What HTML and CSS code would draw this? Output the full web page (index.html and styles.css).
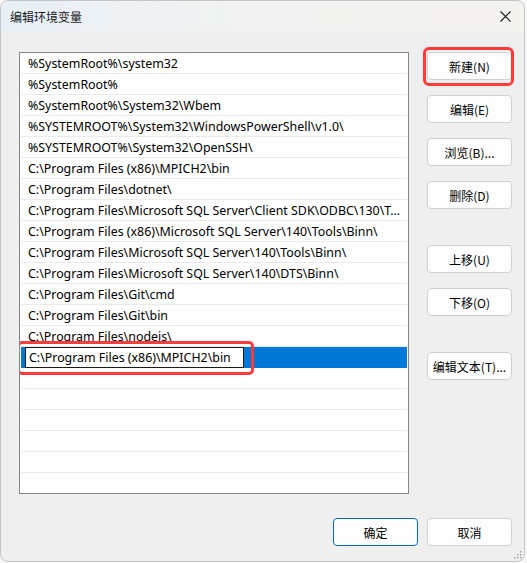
FILE: index.html
```html
<!DOCTYPE html>
<html lang="zh-CN">
<head>
  <meta charset="UTF-8">
  <title>编辑环境变量</title>
  <link rel="stylesheet" href="styles.css">
</head>
<body>

  <div class="window">
    <div class="titlebar">
      <span class="title">编辑环境变量</span>
      <span class="close">
        <svg width="11" height="11" viewBox="0 0 11 11">
          <path d="M0.5 0.5 L10.5 10.5 M10.5 0.5 L0.5 10.5" stroke="#1a1a1a" stroke-width="1.1" fill="none"/>
        </svg>
      </span>
    </div>

    <div class="content">
      <div class="main">
        <div class="listbox" id="pathList"></div>

        <div class="side">
          <button class="btn marked">新建(N)</button>
          <button class="btn">编辑(E)</button>
          <button class="btn">浏览(B)...</button>
          <button class="btn">删除(D)</button>
          <button class="btn group">上移(U)</button>
          <button class="btn">下移(O)</button>
          <button class="btn group">编辑文本(T)...</button>
        </div>
      </div>

      <div class="footer">
        <button class="btn primary">确定</button>
        <button class="btn">取消</button>
      </div>
    </div>

    <svg class="grip" width="8" height="8" viewBox="0 0 8 8">
      <rect x="6" y="0" width="1.5" height="1.5" fill="#a0a0a0"/>
      <rect x="3" y="3" width="1.5" height="1.5" fill="#a0a0a0"/>
      <rect x="6" y="3" width="1.5" height="1.5" fill="#a0a0a0"/>
      <rect x="0" y="6" width="1.5" height="1.5" fill="#a0a0a0"/>
      <rect x="3" y="6" width="1.5" height="1.5" fill="#a0a0a0"/>
      <rect x="6" y="6" width="1.5" height="1.5" fill="#a0a0a0"/>
    </svg>
  </div>

  <script>
    const paths = [
      "%SystemRoot%\\system32",
      "%SystemRoot%",
      "%SystemRoot%\\System32\\Wbem",
      "%SYSTEMROOT%\\System32\\WindowsPowerShell\\v1.0\\",
      "%SYSTEMROOT%\\System32\\OpenSSH\\",
      "C:\\Program Files (x86)\\MPICH2\\bin",
      "C:\\Program Files\\dotnet\\",
      "C:\\Program Files\\Microsoft SQL Server\\Client SDK\\ODBC\\130\\Tools\\Binn\\",
      "C:\\Program Files (x86)\\Microsoft SQL Server\\140\\Tools\\Binn\\",
      "C:\\Program Files\\Microsoft SQL Server\\140\\Tools\\Binn\\",
      "C:\\Program Files\\Microsoft SQL Server\\140\\DTS\\Binn\\",
      "C:\\Program Files\\Git\\cmd",
      "C:\\Program Files\\Git\\bin",
      "C:\\Program Files\\nodejs\\"
    ];
    const editing = "C:\\Program Files (x86)\\MPICH2\\bin";
    const emptyRows = 6;

    const list = document.getElementById('pathList');

    paths.forEach((p) => {
      const row = document.createElement('div');
      row.className = 'row';
      row.textContent = p;
      list.appendChild(row);
    });

    // the new entry, still being typed in
    const sel = document.createElement('div');
    sel.className = 'row selected';
    const input = document.createElement('span');
    input.className = 'editor';
    input.textContent = editing;
    const mark = document.createElement('span');
    mark.className = 'mark';
    sel.appendChild(input);
    sel.appendChild(mark);
    list.appendChild(sel);

    for (let i = 0; i < emptyRows; i++) {
      const row = document.createElement('div');
      row.className = 'row';
      list.appendChild(row);
    }
  </script>

</body>
</html>
```

FILE: styles.css
```css
body {
  margin: 0;
  background: #f7f7f7;
  font-family: "Noto Sans", "Noto Sans CJK SC", sans-serif;
  font-size: 12px;
  color: #000;
}

.window {
  position: relative;
  box-sizing: border-box;
  width: 525px;
  height: 562px;
  border: 1px solid #c4c4c4;
  border-radius: 8px;
  overflow: hidden;
  background: #efefef;
}

.titlebar {
  height: 30px;
  display: flex;
  align-items: center;
  justify-content: space-between;
  padding: 0 9px;
  background: linear-gradient(90deg, #e8f0f7 0%, #f1f2f2 45%, #f5f3ee 100%);
}

.title {
  font-family: "Noto Sans CJK SC", sans-serif;
  font-size: 12px;
  color: #1a1a1a;
}

.close {
  display: flex;
  margin-right: 4px;
}

.content {
  padding: 21px 12px 0 18px;
}

.main {
  display: flex;
  align-items: flex-start;
}

.listbox {
  box-sizing: border-box;
  width: 390px;
  height: 442px;
  border: 1px solid #828790;
  background: #fff;
  overflow: hidden;
  font-size: 12.4px;
}

.row {
  position: relative;
  box-sizing: border-box;
  height: 21px;
  line-height: 20px;
  padding: 1px 4px 0 7px;
  border-bottom: 1px solid #ebebeb;
  margin: 0 1px 0 1px;
  white-space: nowrap;
  overflow: hidden;
  text-overflow: ellipsis;
}

.row.selected {
  background: #0078d7;
  border-bottom-color: #0078d7;
  overflow: visible;
  padding: 0;
}

.editor {
  display: inline-block;
  box-sizing: border-box;
  height: 21px;
  width: 219px;
  margin-left: 4px;
  padding: 1px 0 0 3px;
  line-height: 18px;
  background: #fff;
  border: 1px solid #1a1a1a;
}

.mark {
  position: absolute;
  left: -4px;
  top: -6px;
  width: 231px;
  height: 28px;
  border: 3px solid #ff3b3b;
  border-radius: 5px;
}

.side {
  display: flex;
  flex-direction: column;
  gap: 15px;
  margin-left: 18px;
}

.side .group {
  margin-top: 21px;
}

.btn {
  position: relative;
  box-sizing: border-box;
  width: 85px;
  height: 28px;
  padding: 0;
  font-family: "Noto Sans CJK SC", sans-serif;
  font-size: 12px;
  color: #000;
  background: #fdfdfd;
  border: 1px solid #d0d0d0;
  border-radius: 4px;
}

.btn.marked::after {
  content: "";
  position: absolute;
  left: -5px;
  top: -6px;
  right: -3px;
  bottom: -7px;
  border: 3px solid #ff3b3b;
  border-radius: 6px;
}

.btn.primary {
  border-color: #0067c0;
}

.footer {
  display: flex;
  justify-content: flex-end;
  gap: 9px;
  margin-top: 24px;
}

.grip {
  position: absolute;
  right: 2px;
  bottom: 2px;
}
```
